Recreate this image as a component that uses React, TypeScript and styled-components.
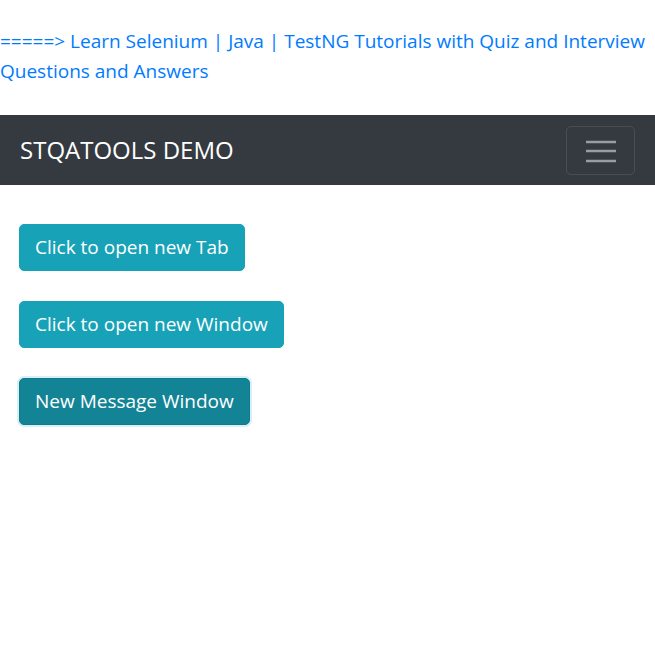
import React from "react";
import styled, { createGlobalStyle } from "styled-components";

const Global = createGlobalStyle`
  html, body { margin: 0; padding: 0; background: #fff; }
  body {
    font-family: "Open Sans", "Noto Sans", sans-serif;
    font-size: 19px;
    line-height: 30px;
    color: #212529;
  }
`;

const Page = styled.div`
  display: flex;
  flex-direction: column;
`;

const Intro = styled.p`
  margin: 26px 0 29px;
`;

const Link = styled.a`
  color: #007bff;
  text-decoration: none;
`;

const Navbar = styled.nav`
  height: 70px;
  box-sizing: border-box;
  background: #343a40;
  display: flex;
  align-items: center;
  justify-content: space-between;
  padding: 0 20px;
`;

const Brand = styled.span`
  color: #fff;
  font-size: 24px;
  line-height: 30px;
`;

const Toggler = styled.button`
  width: 69px;
  height: 49px;
  box-sizing: border-box;
  border: 1px solid rgba(255, 255, 255, 0.1);
  border-radius: 5px;
  background: transparent;
  display: flex;
  align-items: center;
  justify-content: center;
  padding: 0;
`;

const Content = styled.div`
  display: flex;
  flex-direction: column;
  align-items: flex-start;
  gap: 30px;
  padding: 39px 19px;
`;

const Button = styled.button<{ $active?: boolean }>`
  font-family: inherit;
  font-size: 19px;
  line-height: 31px;
  color: #fff;
  background: ${(p) => (p.$active ? "#138496" : "#17a2b8")};
  border: 1px solid ${(p) => (p.$active ? "#117a8b" : "#17a2b8")};
  border-radius: 5px;
  padding: 7px 15px;
  box-shadow: ${(p) => (p.$active ? "0 0 0 2px rgba(58,176,195,0.2)" : "none")};
  cursor: pointer;
`;

export default function App() {
  return (
    <Page>
      <Global />
      <Intro>
        <Link href="#">
          =====&gt; Learn Selenium | Java | TestNG Tutorials with Quiz and Interview Questions and Answers
        </Link>
      </Intro>
      <Navbar>
        <Brand>STQATOOLS DEMO</Brand>
        <Toggler aria-label="Toggle navigation">
          <svg width="30" height="30" viewBox="0 0 30 30">
            <path
              d="M0 7h30M0 16h30M0 26h30"
              stroke="rgba(255,255,255,0.5)"
              strokeWidth="2.5"
            />
          </svg>
        </Toggler>
      </Navbar>
      <Content>
        <Button>Click to open new Tab</Button>
        <Button>Click to open new Window</Button>
        <Button $active>New Message Window</Button>
      </Content>
    </Page>
  );
}
